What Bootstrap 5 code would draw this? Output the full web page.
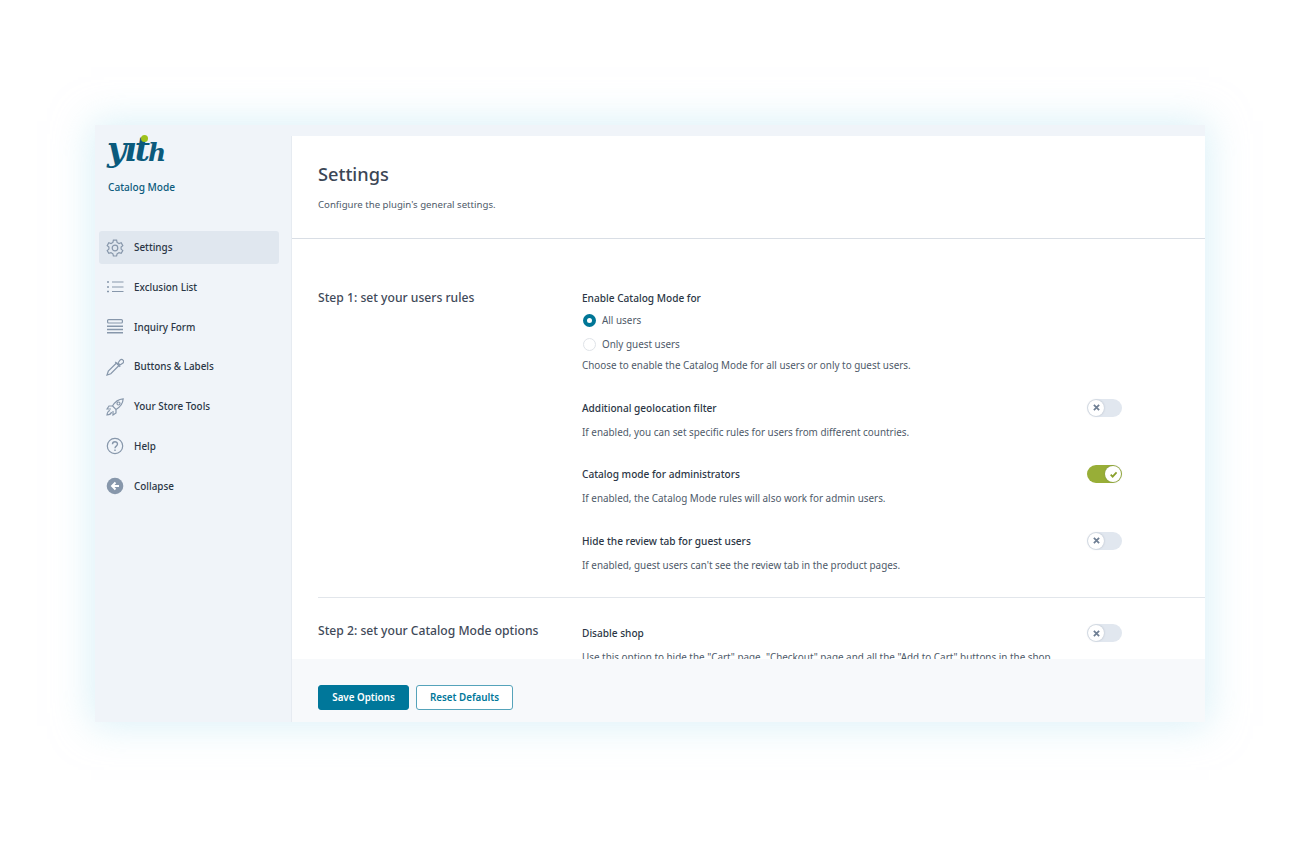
<!DOCTYPE html>
<html lang="en">
<head>
  <meta charset="UTF-8">
  <title>Catalog Mode Settings</title>
  <link href="https://cdn.jsdelivr.net/npm/bootstrap@5.3.0/dist/css/bootstrap.min.css" rel="stylesheet">
  <style>
    html, body {
      height: 100%;
      margin: 0;
    }

    body {
      background: #fff;
      font-family: "Noto Sans", "Open Sans", sans-serif;
      font-size: 9.9px;
      color: #4e5a69;
      overflow: hidden;
      padding: 125px 95px 0;
    }

    .app-window {
      width: 1110px;
      height: 597px;
      background: #f0f4f9;
      box-shadow: 0 0 36px 4px rgba(190, 230, 242, .55);
    }

    .side-bar {
      width: 196px;
      flex: none;
    }

    .logo-box {
      padding: 0 0 0 12px;
      height: 106px;
    }

    .logo-word {
      position: relative;
      display: block;
      height: 46px;
      padding-top: 7px;
      font-family: "DejaVu Serif", serif;
      font-style: italic;
      font-weight: 700;
      font-size: 33px;
      line-height: 36px;
      letter-spacing: -2px;
      color: #0b5a7c;
    }

    .logo-word small {
      font-size: 25px;
      font-weight: 700;
    }

    .logo-dot {
      position: absolute;
      left: 34px;
      top: 10px;
      width: 7px;
      height: 7px;
      border-radius: 50%;
      background: #9ec21c;
    }

    .logo-name {
      margin-top: 9px;
      padding-left: 1px;
      font-size: 10.1px;
      font-weight: 500;
      color: #0b5a7c;
    }

    .side-link {
      display: flex;
      align-items: center;
      gap: 10px;
      width: 180px;
      height: 33px;
      margin: 0 0 6.8px 4px;
      padding-left: 7px;
      border-radius: 3px;
      color: #2b3645;
      font-size: 9.9px;
      font-weight: 500;
      text-decoration: none;
    }

    .side-link.on {
      background: #e0e7ef;
    }

    .side-link svg {
      width: 18px;
      height: 18px;
      flex: none;
      fill: none;
      stroke: #8797ab;
      stroke-width: 1.2;
    }

    .main-panel {
      margin-top: 11px;
      background: #fff;
      border-left: 1px solid #e6ebf1;
      min-width: 0;
    }

    .panel-head {
      height: 103px;
      padding: 25px 0 0 26px;
      border-bottom: 1px solid #d9dee5;
    }

    .panel-head h1 {
      font-size: 18.2px;
      font-weight: 500;
      line-height: 26px;
      color: #3b4655;
      margin: 0 0 10px;
    }

    .panel-head p {
      margin: 0;
      line-height: 16px;
      font-size: 9.65px;
    }

    .scroll-area {
      overflow: hidden;
      padding-left: 26px;
      min-height: 0;
    }

    .step-block {
      display: flex;
      border-bottom: 1px solid #e2e6eb;
    }

    .step-1 {
      padding-top: 49px;
      height: 359px;
    }

    .step-2 {
      padding-top: 25px;
      border-bottom: 0;
    }

    .step-2 .step-title {
      margin-top: -2px;
    }

    .step-title {
      width: 264px;
      flex: none;
      font-size: 12.15px;
      font-weight: 500;
      line-height: 20px;
      color: #3f4a59;
    }

    .opt-list {
      width: 540px;
    }

    .opt-row {
      position: relative;
    }

    .opt-gap {
      margin-top: 24.5px;
    }

    .opt-label {
      font-size: 10.1px;
      font-weight: 500;
      color: #2b3645;
      line-height: 20px;
    }

    .opt-desc {
      line-height: 16px;
      margin-top: 6px;
    }

    .opt-desc.opt-tight {
      margin-top: 1px;
    }

    .radio-line {
      display: flex;
      align-items: center;
      gap: 6px;
      height: 24px;
      padding-left: 1px;
    }

    .radio-line:first-of-type {
      margin-top: 1px;
    }

    .radio-mark {
      width: 13px;
      height: 13px;
      border-radius: 50%;
      border: 1px solid #dfe3e8;
      background: #fff;
      flex: none;
    }

    .radio-mark.on {
      border: 4px solid #007696;
    }

    .tgl {
      position: absolute;
      right: 0;
      top: 1px;
      width: 35px;
      height: 18px;
      border-radius: 9px;
      background: #e1e7ef;
      padding: 1px;
      display: flex;
    }

    .tgl.on {
      background: #98ae37;
      justify-content: flex-end;
    }

    .tgl-knob {
      width: 16px;
      height: 16px;
      border-radius: 50%;
      background: #fff;
      display: flex;
      align-items: center;
      justify-content: center;
      box-shadow: 0 0 2px rgba(90, 105, 125, .4);
    }

    .tgl-knob svg {
      width: 7px;
      height: 7px;
      fill: none;
      stroke: #6f7f94;
      stroke-width: 2;
    }

    .tgl.on .tgl-knob svg {
      stroke: #8aa02c;
    }

    .panel-foot {
      height: 63px;
      flex: none;
      background: #f7f9fb;
      padding: 26px 0 0 26px;
      gap: 7px;
    }

    .btn-save, .btn-reset {
      height: 25px;
      padding: 0;
      font-size: 9.8px;
      font-weight: 600;
      line-height: 23px;
      border-radius: 3px;
    }

    .btn-save {
      width: 91px;
      background: #00779a;
      border: 1px solid #00779a;
      color: #fff;
    }

    .btn-reset {
      width: 97px;
      background: #fff;
      border: 1px solid #55a3ba;
      color: #00779a;
    }
  </style>
</head>
<body>
<div class="app-window d-flex">
  <!-- Sidebar -->
  <div class="side-bar">
    <div class="logo-box">
      <span class="logo-word">yıt<small>h</small><i class="logo-dot"></i></span>
      <div class="logo-name">Catalog Mode</div>
    </div>
    <a class="side-link on" href="#">
      <svg viewBox="0 0 18 18"><path d="M7.400 1.200h3.200l.5 2.200 1.900 1.100 2.200-.7 1.600 2.800-1.700 1.500v2l1.700 1.500-1.600 2.800-2.200-.7-1.900 1.100-.5 2.200H7.400l-.5-2.200-1.900-1.100-2.200.7-1.600-2.800 1.700-1.500v-2L1.200 6.600l1.600-2.800 2.200.7 1.900-1.100z"/><circle cx="9" cy="9" r="2.800"/></svg>
      Settings
    </a>
    <a class="side-link" href="#">
      <svg viewBox="0 0 18 18"><path d="M6 4h11.500M6 9h11.500M6 13.500h11.500"/><path d="M1 4h2M1 9h2M1 13.500h2" stroke-width="1.500"/></svg>
      Exclusion List
    </a>
    <a class="side-link" href="#">
      <svg viewBox="0 0 18 18"><rect x="1.600" y="1.600" width="14.800" height="3.400" rx="1"/><path d="M1 8.200h16M1 11.500h16M1 14.800h16" stroke-width="1.400"/></svg>
      Inquiry Form
    </a>
    <a class="side-link" href="#">
      <svg viewBox="0 0 18 18"><path d="M10.500 5 2.300 13.200 1 17l3.800-1.300L13 7.500z"/><path d="M9.200 3.800l5 5"/><path d="M12 5l2-2.800c1-1 2.200-1 3 0 .8.800.700 2 0 2.800l-3 2z"/></svg>
      Buttons &amp; Labels
    </a>
    <a class="side-link" href="#">
      <svg viewBox="0 0 18 18"><path d="M17.200 .8c-4.500.3-8 2.500-10.700 7.200l3.500 3.500c4.700-2.700 6.900-6.200 7.200-10.700z"/><path d="M6.500 8H3L1 11h4M10 11.500V15l-3 2v-4"/><circle cx="12.500" cy="5.500" r="1.500"/><path d="M4 12.500c-2 .5-2.800 2-3 4.500 2.500-.2 4-1 4.500-3"/></svg>
      Your Store Tools
    </a>
    <a class="side-link" href="#">
      <svg viewBox="0 0 18 18"><circle cx="9" cy="9" r="7.700"/><path d="M6.500 7.200c0-3.200 5-3.200 5-.1 0 2-2.500 2-2.500 4.100" stroke-width="1.400"/><path d="M9 12.400v1.500" stroke-width="1.400"/></svg>
      Help
    </a>
    <a class="side-link" href="#">
      <svg viewBox="0 0 18 18"><circle cx="9" cy="9" r="8.300" fill="#8797ab" stroke="none"/><path d="M9.500 5.500 6 9l3.500 3.500M6.500 9H13" stroke="#fff" stroke-width="1.900"/></svg>
      Collapse
    </a>
  </div>

  <!-- Main panel -->
  <div class="main-panel flex-grow-1 d-flex flex-column">
    <div class="panel-head flex-shrink-0">
      <h1>Settings</h1>
      <p>Configure the plugin's general settings.</p>
    </div>

    <div class="scroll-area flex-grow-1">
      <div class="step-block step-1">
        <div class="step-title">Step 1: set your users rules</div>
        <div class="opt-list">
          <div class="opt-row">
            <div class="opt-label">Enable Catalog Mode for</div>
            <div class="radio-line"><span class="radio-mark on"></span>All users</div>
            <div class="radio-line"><span class="radio-mark"></span>Only guest users</div>
            <div class="opt-desc opt-tight">Choose to enable the Catalog Mode for all users or only to guest users.</div>
          </div>
          <div class="opt-row opt-gap">
            <div class="opt-label">Additional geolocation filter</div>
            <div class="opt-desc">If enabled, you can set specific rules for users from different countries.</div>
            <div class="tgl"><span class="tgl-knob"><svg viewBox="0 0 8 8"><path d="M1 1l6 6M7 1 1 7"/></svg></span></div>
          </div>
          <div class="opt-row opt-gap">
            <div class="opt-label">Catalog mode for administrators</div>
            <div class="opt-desc">If enabled, the Catalog Mode rules will also work for admin users.</div>
            <div class="tgl on"><span class="tgl-knob"><svg viewBox="0 0 8 8"><path d="M.8 4.200 3 6.500 7.500 1.500"/></svg></span></div>
          </div>
          <div class="opt-row opt-gap">
            <div class="opt-label">Hide the review tab for guest users</div>
            <div class="opt-desc">If enabled, guest users can't see the review tab in the product pages.</div>
            <div class="tgl"><span class="tgl-knob"><svg viewBox="0 0 8 8"><path d="M1 1l6 6M7 1 1 7"/></svg></span></div>
          </div>
        </div>
      </div>
      <div class="step-block step-2">
        <div class="step-title">Step 2: set your Catalog Mode options</div>
        <div class="opt-list">
          <div class="opt-row">
            <div class="opt-label">Disable shop</div>
            <div class="opt-desc">Use this option to hide the "Cart" page, "Checkout" page and all the "Add to Cart" buttons in the shop.</div>
            <div class="tgl"><span class="tgl-knob"><svg viewBox="0 0 8 8"><path d="M1 1l6 6M7 1 1 7"/></svg></span></div>
          </div>
        </div>
      </div>
    </div>

    <div class="panel-foot d-flex">
      <button class="btn btn-save">Save Options</button>
      <button class="btn btn-reset">Reset Defaults</button>
    </div>
  </div>
</div>
<script src="https://cdn.jsdelivr.net/npm/bootstrap@5.3.0/dist/js/bootstrap.bundle.min.js"></script>
</body>
</html>
